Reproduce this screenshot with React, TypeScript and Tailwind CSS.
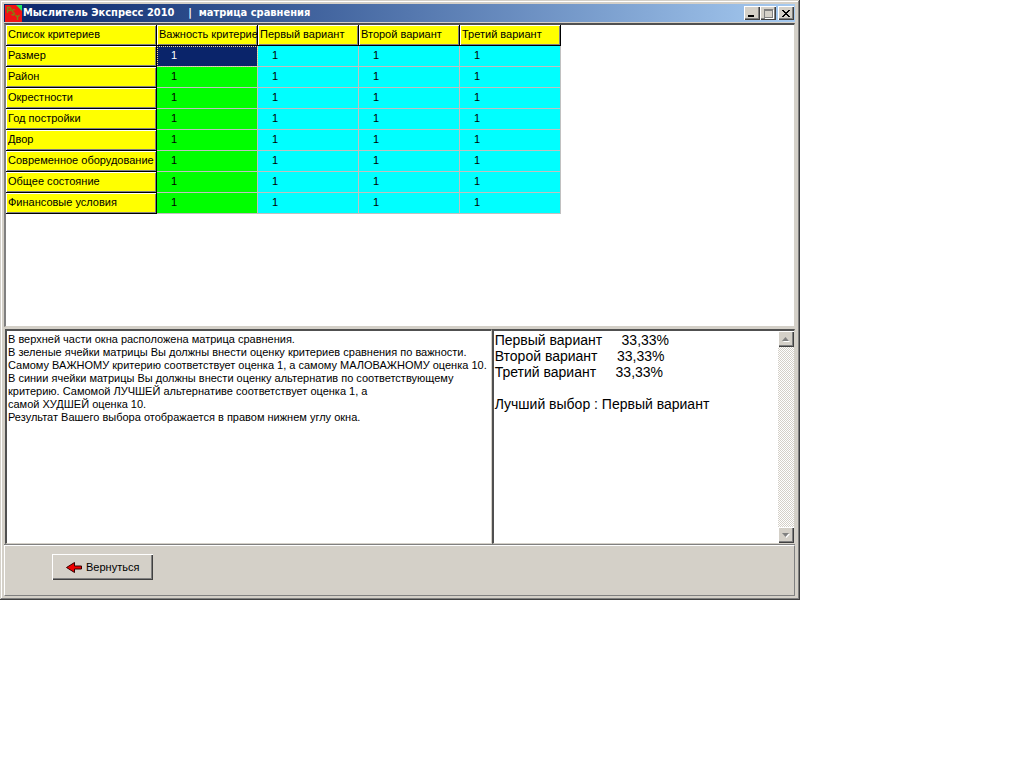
import { useState } from "react";
import clsx from "clsx";

const options = ["Первый вариант", "Второй вариант", "Третий вариант"];

const criteria = [
	"Размер",
	"Район",
	"Окрестности",
	"Год постройки",
	"Двор",
	"Современное оборудование",
	"Общее состояние",
	"Финансовые условия",
];

const help = `В верхней части окна расположена матрица сравнения.
В зеленые ячейки матрицы Вы должны внести оценку критериев сравнения по важности.
Самому ВАЖНОМУ критерию соответствует оценка 1, а самому МАЛОВАЖНОМУ оценка 10.
В синии ячейки матрицы Вы должны внести оценку альтернатив по соответствующему
критерию. Самомой ЛУЧШЕЙ альтернативе соответствует оценка 1, а
самой ХУДШЕЙ оценка 10.
Результат Вашего выбора отображается в правом нижнем углу окна.`;

const result = `Первый вариант     33,33%
Второй вариант     33,33%
Третий вариант     33,33%

Лучший выбор : Первый вариант`;

const raised = "bg-[#d4d0c8] shadow-[inset_1px_1px_0_#fff,inset_-1px_-1px_0_#404040,inset_-2px_-2px_0_#808080]";
const sunken = "border-t-2 border-l-2 border-r border-b border-t-[#505050] border-l-[#505050] border-r-[#d4d0c8] border-b-[#d4d0c8] bg-white";
const fixedCell = "h-[21px] overflow-hidden whitespace-nowrap border-r border-b border-black bg-[#ffff00] p-0 pb-0.5 pl-0.5 text-left font-normal shadow-[inset_1px_1px_0_#fff,inset_-1px_-1px_0_#808080]";

function AppIcon() {
	return (
		<svg width="17" height="17" viewBox="0 0 17 17" aria-hidden="true">
			<rect width="17" height="17" fill="#f01414" />
			<path d="M11 0h6v6z" fill="#20e860" />
			<path d="M2.500 8V2.500H5L6 3.500V5L5 5.500H3" fill="none" stroke="#7a8a10" strokeWidth="1.300" />
			<path d="M10 5L8.500 4.500L7 6L9.500 8.500L8.500 10L6.500 9.500" fill="none" stroke="#7a8a10" strokeWidth="1.300" />
			<path d="M10.500 10L12.500 12L14.500 10M12.500 12V15" fill="none" stroke="#7a8a10" strokeWidth="1.300" />
		</svg>
	);
}

function TitleBar() {
	return (
		<header className="flex h-[18px] items-center bg-linear-to-r from-[#0a246a] to-[#a6caf0] pr-px pl-px">
			<AppIcon />
			<h1 className="flex-1 pl-px font-['DejaVu_Sans_Condensed','DejaVu_Sans',sans-serif] text-[11px] leading-4 font-bold whitespace-pre text-white">
				{"Мыслитель Экспресс 2010    |  матрица сравнения"}
			</h1>
			<button type="button" aria-label="Свернуть" className={clsx(raised, "flex h-3.5 w-4 items-end pb-[3px] pl-1")}>
				<span className="h-0.5 w-1.5 bg-black" />
			</button>
			<button type="button" aria-label="Развернуть" disabled className={clsx(raised, "flex h-3.5 w-4 items-center justify-center")}>
				<span className="h-[9px] w-[9px] border border-t-2 border-[#808080] shadow-[1px_1px_0_#fff]" />
			</button>
			<button type="button" aria-label="Закрыть" className={clsx(raised, "ml-0.5 flex h-3.5 w-4 items-center justify-center")}>
				<svg width="8" height="7" viewBox="0 0 8 7" shapeRendering="crispEdges">
					<path d="M0 0h2v1h1v1h2v-1h1v-1h2v1h-1v1h-1v1h-1v1h1v1h1v1h1v1h-2v-1h-1v-1h-2v1h-1v1h-2v-1h1v-1h1v-1h1v-1h-1v-1h-1v-1h-1z" />
				</svg>
			</button>
		</header>
	);
}

function Matrix() {
	const [selected, setSelected] = useState("0-0");

	return (
		<table className="w-[555px] table-fixed border-separate border-spacing-0 leading-4">
			<colgroup>
				<col className="w-[151px]" />
				<col />
				<col />
				<col />
				<col />
			</colgroup>
			<thead>
				<tr>
					{["Список критериев", "Важность критериев", ...options].map((title) => (
						<th key={title} scope="col" className={fixedCell}>{title}</th>
					))}
				</tr>
			</thead>
			<tbody>
				{criteria.map((name, row) => (
					<tr key={name}>
						<th scope="row" className={fixedCell}>{name}</th>
						{[0, 1, 2, 3].map((col) => {
							const active = selected === row + "-" + col;
							return (
								<td
									key={col}
									onClick={() => setSelected(row + "-" + col)}
									className={clsx(
										"h-[21px] border-r border-b border-[#c0c0c0] p-0 pb-0.5 pl-3.5",
										active
											? "bg-[#0a246a] text-white outline-1 -outline-offset-1 outline-dotted outline-[#f5db95]"
											: col === 0 ? "bg-[#00ff00]" : "bg-[#00ffff]"
									)}
								>
									1
								</td>
							);
						})}
					</tr>
				))}
			</tbody>
		</table>
	);
}

function ScrollBar() {
	return (
		<div className="flex w-4 flex-col justify-between bg-[repeating-conic-gradient(#d4d0c8_0_25%,#fff_0_50%)] bg-size-[2px_2px]">
			<button type="button" disabled aria-label="Вверх" className={clsx(raised, "flex h-4 items-center justify-center")}>
				<svg width="8" height="5" viewBox="0 0 8 5"><path d="M1 5h7L4.500 1z" fill="#fff" /><path d="M0 4h7L3.500 0z" fill="#808080" /></svg>
			</button>
			<button type="button" disabled aria-label="Вниз" className={clsx(raised, "flex h-4 items-center justify-center")}>
				<svg width="8" height="5" viewBox="0 0 8 5"><path d="M1 1h7L4.500 5z" fill="#fff" /><path d="M0 0h7L3.500 4z" fill="#808080" /></svg>
			</button>
		</div>
	);
}

export default function App() {
	return (
		<div className="min-h-screen bg-white font-['Liberation_Sans',Arial,sans-serif] text-[11px] text-black">
			<main className="w-25/32 bg-[#d4d0c8] py-1 pr-[5px] pl-1 shadow-[inset_-1px_-1px_0_#404040,inset_1px_1px_0_#d4d0c8,inset_-2px_-2px_0_#808080,inset_2px_2px_0_#fff]">
				<TitleBar />
				<section className="mt-px min-h-[304px] border-t-2 border-r border-b border-l-2 border-t-[#505050] border-r-[#d4d0c8] border-b-[#d4d0c8] border-l-[#808080] bg-white">
					<Matrix />
				</section>
				<section className="mt-0.5 flex min-h-[215px] pl-px">
					<textarea
						readOnly
						aria-label="Справка"
						value={help}
						className={clsx(sunken, "min-w-0 flex-[487] resize-none overflow-hidden py-0.5 pl-px leading-[13px] whitespace-pre outline-none")}
					/>
					<div className={clsx(sunken, "flex min-w-0 flex-[303]")}>
						<textarea
							readOnly
							aria-label="Результат"
							value={result}
							className="min-w-0 flex-1 resize-none overflow-hidden pt-px pl-px text-[14px] leading-4 whitespace-pre outline-none"
						/>
						<ScrollBar />
					</div>
				</section>
				<footer className="mt-px border border-t-white border-r-[#808080] border-b-[#808080] border-l-white px-[47px] pt-2 pb-[15px] shadow-[0_-1px_0_#808080]">
					<button type="button" className={clsx(raised, "flex h-[26px] w-[101px] items-center gap-1 pl-3.5")}>
						<svg width="16" height="11" viewBox="0 0 16 11">
							<path d="M0.500 5.500L8.500 0.500V4h7v3h-7v3.500z" fill="#f00000" stroke="#300" />
						</svg>
						Вернуться
					</button>
				</footer>
			</main>
		</div>
	);
}
